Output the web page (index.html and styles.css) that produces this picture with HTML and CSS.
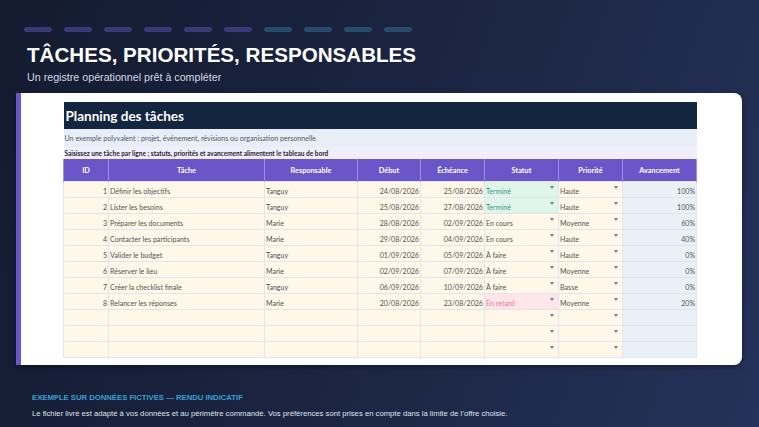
FILE: index.html
```html
<!DOCTYPE html>
<html lang="fr">
<head>
<meta charset="utf-8">
<link rel="stylesheet" href="styles.css">
</head>
<body>
<div class="page">
  <div class="dashes">
    <span class="dash p"></span><span class="dash p"></span><span class="dash p"></span><span class="dash p"></span><span class="dash p"></span><span class="dash p"></span>
    <span class="dash t"></span><span class="dash t"></span><span class="dash t"></span><span class="dash t"></span>
  </div>
  <h1 class="title">TÂCHES, PRIORITÉS, RESPONSABLES</h1>
  <p class="subtitle">Un registre opérationnel prêt à compléter</p>
  <div class="card">
    <table class="sheet">
      <colgroup>
        <col style="width:45px"><col style="width:156px"><col style="width:93px"><col style="width:63px"><col style="width:64px"><col style="width:74px"><col style="width:64px"><col style="width:74px">
      </colgroup>
      <tr class="r-title"><td colspan="8">Planning des tâches</td></tr>
      <tr class="r-sub"><td colspan="8">Un exemple polyvalent : projet, événement, révisions ou organisation personnelle</td></tr>
      <tr class="r-ins"><td colspan="8">Saisissez une tâche par ligne ; statuts, priorités et avancement alimentent le tableau de bord</td></tr>
      <tr class="r-head"><th>ID</th><th>Tâche</th><th>Responsable</th><th>Début</th><th>Échéance</th><th>Statut</th><th>Priorité</th><th>Avancement</th></tr>
      <tr class="row"><td class="num">1</td><td>Définir les objectifs</td><td>Tanguy</td><td class="num">24/08/2026</td><td class="num">25/08/2026</td><td class="dd done">Terminé</td><td class="dd">Haute</td><td class="pct">100%</td></tr>
      <tr class="row"><td class="num">2</td><td>Lister les besoins</td><td>Tanguy</td><td class="num">25/08/2026</td><td class="num">27/08/2026</td><td class="dd done">Terminé</td><td class="dd">Haute</td><td class="pct">100%</td></tr>
      <tr class="row"><td class="num">3</td><td>Préparer les documents</td><td>Marie</td><td class="num">28/08/2026</td><td class="num">02/09/2026</td><td class="dd">En cours</td><td class="dd">Moyenne</td><td class="pct">60%</td></tr>
      <tr class="row"><td class="num">4</td><td>Contacter les participants</td><td>Marie</td><td class="num">29/08/2026</td><td class="num">04/09/2026</td><td class="dd">En cours</td><td class="dd">Haute</td><td class="pct">40%</td></tr>
      <tr class="row"><td class="num">5</td><td>Valider le budget</td><td>Tanguy</td><td class="num">01/09/2026</td><td class="num">05/09/2026</td><td class="dd">À faire</td><td class="dd">Haute</td><td class="pct">0%</td></tr>
      <tr class="row"><td class="num">6</td><td>Réserver le lieu</td><td>Marie</td><td class="num">02/09/2026</td><td class="num">07/09/2026</td><td class="dd">À faire</td><td class="dd">Moyenne</td><td class="pct">0%</td></tr>
      <tr class="row"><td class="num">7</td><td>Créer la checklist finale</td><td>Tanguy</td><td class="num">06/09/2026</td><td class="num">10/09/2026</td><td class="dd">À faire</td><td class="dd">Basse</td><td class="pct">0%</td></tr>
      <tr class="row"><td class="num">8</td><td>Relancer les réponses</td><td>Marie</td><td class="num">20/08/2026</td><td class="num">23/08/2026</td><td class="dd late">En retard</td><td class="dd">Moyenne</td><td class="pct">20%</td></tr>
      <tr class="row"><td></td><td></td><td></td><td></td><td></td><td class="dd"></td><td class="dd"></td><td class="pct"></td></tr>
      <tr class="row"><td></td><td></td><td></td><td></td><td></td><td class="dd"></td><td class="dd"></td><td class="pct"></td></tr>
      <tr class="row"><td></td><td></td><td></td><td></td><td></td><td class="dd"></td><td class="dd"></td><td class="pct"></td></tr>
    </table>
  </div>
  <div class="footer">
    <p class="note">EXEMPLE SUR DONNÉES FICTIVES — RENDU INDICATIF</p>
    <p class="legal">Le fichier livré est adapté à vos données et au périmètre commandé. Vos préférences sont prises en compte dans la limite de l’offre choisie.</p>
  </div>
</div>
</body>
</html>
```
FILE: styles.css
```css
html, body {
  margin: 0;
  padding: 0;
}
body {
  width: 759px;
  height: 427px;
  overflow: hidden;
  background: linear-gradient(110deg, #141b30 0%, #1a2440 45%, #253259 100%);
  font-family: "Liberation Sans", Arial, sans-serif;
}
.page {
  display: flex;
  flex-direction: column;
  padding-top: 27px;
}
.dashes {
  display: flex;
  gap: 12px;
  padding-left: 24px;
  height: 5px;
}
.dash {
  width: 28px;
  height: 5px;
  border-radius: 3px;
}
.dash.p { background: #3b3876; }
.dash.t { background: #284a6b; }
.title {
  margin: 11px 0 0 27px;
  font-size: 20.6px;
  line-height: 24px;
  font-weight: bold;
  color: #ffffff;
}
.subtitle {
  margin: 4px 0 0 27px;
  font-size: 10.7px;
  line-height: 13px;
  color: #d3d8e6;
}
.card {
  margin: 9px 0 0 16px;
  width: 726px;
  height: 272px;
  box-sizing: border-box;
  background: #ffffff;
  border-left: 5px solid #6a56c8;
  border-radius: 0 8px 8px 0;
  box-shadow: 0 2px 6px rgba(0, 0, 0, 0.35);
  padding: 9px 0 0 42px;
}
.sheet {
  border-collapse: collapse;
  table-layout: fixed;
  width: 633px;
  font-family: Lato, "Open Sans", sans-serif;
  font-size: 7.1px;
  color: #555555;
}
.sheet td, .sheet th {
  padding: 0 1px;
  overflow: hidden;
  white-space: nowrap;
}
.r-title td {
  height: 27px;
  background: #12263f;
  color: #ffffff;
  font-size: 13.5px;
  font-weight: bold;
  padding-left: 2px;
}
.r-sub td {
  height: 18px;
  background: #e9eef6;
  color: #4d5a6c;
  font-size: 7.1px;
  padding-left: 1px;
}
.r-ins td {
  height: 12px;
  background: #f1eefc;
  color: #1c2233;
  font-size: 6.5px;
  font-weight: bold;
  padding-left: 1px;
}
.r-head th {
  height: 22px;
  background: #6a56c8;
  color: #ffffff;
  font-size: 7.3px;
  font-weight: bold;
  text-align: center;
  border-left: 1px solid #9d8fe0;
  border-right: 1px solid #9d8fe0;
}
.row {
  height: 16px;
}
.row td {
  background: #fff7e7;
  border: 1px solid #e2e6ec;
  vertical-align: bottom;
  padding-bottom: 1px;
  line-height: 9px;
}
.row td.num { text-align: right; }
.row td.pct {
  text-align: right;
  background: #eaf0f8;
}
.row td.dd {
  position: relative;
  padding-right: 12px;
}
.row td.dd::after {
  content: "";
  position: absolute;
  right: 4px;
  top: 4px;
  border-left: 2.5px solid transparent;
  border-right: 2.5px solid transparent;
  border-top: 3px solid #7a7a84;
}
.row td.done {
  background: #dff5ea;
  color: #3a9a80;
}
.row td.late {
  background: #fde5ea;
  color: #f07890;
}
.footer {
  margin: 28px 0 0 32px;
}
.note {
  margin: 0;
  font-size: 7.7px;
  line-height: 10px;
  font-weight: bold;
  color: #3a9fd2;
}
.legal {
  margin: 6px 0 0 0;
  font-size: 7.7px;
  line-height: 10px;
  color: #dfe3ec;
}
```
